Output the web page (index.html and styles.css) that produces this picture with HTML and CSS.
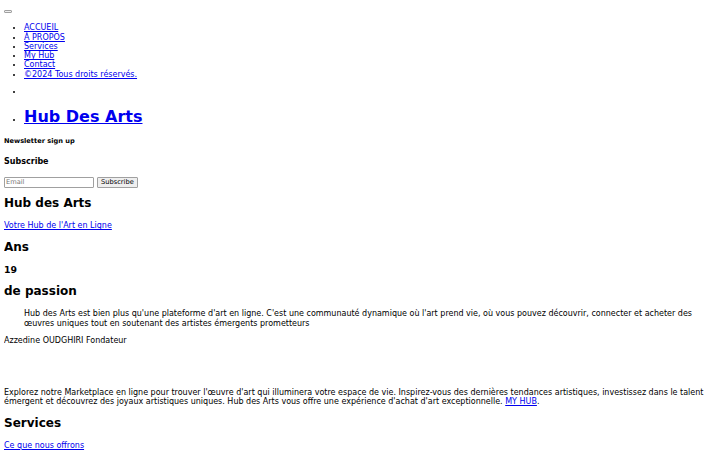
FILE: index.html
```html
<!DOCTYPE html>
<html lang="fr">
<head>
<meta charset="utf-8">
<title>Hub Des Arts</title>
<link rel="stylesheet" href="styles.css">
</head>
<body>
<header class="site-header">
  <button class="menu-toggle" type="button"></button>
  <ul class="nav-list nav-main">
    <li><a href="#">ACCUEIL</a></li>
    <li><a href="#">À PROPOS</a></li>
    <li><a href="#">Services</a></li>
    <li><a href="#">My Hub</a></li>
    <li><a href="#">Contact</a></li>
    <li><a href="#">©2024 Tous droits réservés.</a></li>
  </ul>
  <ul class="nav-list">
    <li></li>
    <li><h1 class="brand"><a href="#">Hub Des Arts</a></h1></li>
  </ul>
</header>
<section class="newsletter">
  <h5 class="h5">Newsletter sign up</h5>
  <h4 class="h4">Subscribe</h4>
  <form class="form">
    <input class="email" type="email" placeholder="Email"> <button class="btn" type="button">Subscribe</button>
  </form>
</section>
<section class="about">
  <h2 class="h2">Hub des Arts</h2>
  <p class="p"><a href="#">Votre Hub de l'Art en Ligne</a></p>
  <h2 class="h2">Ans</h2>
  <h3 class="h3">19</h3>
  <h2 class="h2">de passion</h2>
  <blockquote class="quote">Hub des Arts est bien plus qu'une plateforme d'art en ligne. C'est une communauté dynamique où l'art prend vie, où vous pouvez découvrir, connecter et acheter des œuvres uniques tout en soutenant des artistes émergents prometteurs</blockquote>
  <p class="p">Azzedine OUDGHIRI Fondateur</p>
  <div class="spacer"></div>
  <p class="p">Explorez notre Marketplace en ligne pour trouver l'œuvre d'art qui illuminera votre espace de vie. Inspirez-vous des dernières tendances artistiques, investissez dans le talent émergent et découvrez des joyaux artistiques uniques. Hub des Arts vous offre une expérience d'achat d'art exceptionnelle. <a href="#">MY HUB</a>.</p>
</section>
<section class="services">
  <h2 class="h2">Services</h2>
  <p class="p"><a href="#">Ce que nous offrons</a></p>
</section>
</body>
</html>
```
FILE: styles.css
```css
html { font-family: "DejaVu Sans", sans-serif; font-size: 8px; line-height: 1.164; color: #000; background: #fff; }
body { margin: 4px; }
a { color: #0000ee; }
.menu-toggle { padding: 0.5px 3px; border: 1px solid #a0a0a0; border-radius: 1px; background: #efefef; font-size: 6.67px; vertical-align: baseline; }
.nav-list { margin: 8px 0; padding-left: 20px; }
.nav-main { margin-top: 10px; }
.brand { font-size: 16px; margin: 11.7px 0 10.72px; }
.h5 { font-size: 6.64px; margin: 11.1px 0; }
.h4 { font-size: 8px; margin: 10.64px 0; }
.form { margin: 0; }
.email { font-family: inherit; font-size: 6.67px; width: 86px; padding: 0.5px 1px; border: 1px solid #a0a0a0; border-radius: 1px; margin: 0; }
.btn { font-family: inherit; font-size: 6.67px; padding: 0.5px 3.5px; border: 1px solid #a0a0a0; border-radius: 1px; background: #efefef; margin: 0; }
.h2 { font-size: 12px; margin: 9.96px 0; }
.h3 { font-size: 9.36px; margin: 9.36px 0; }
.p { margin: 8px 0; }
.quote { margin: 8px 20px; }
.spacer { height: 27px; }
```
